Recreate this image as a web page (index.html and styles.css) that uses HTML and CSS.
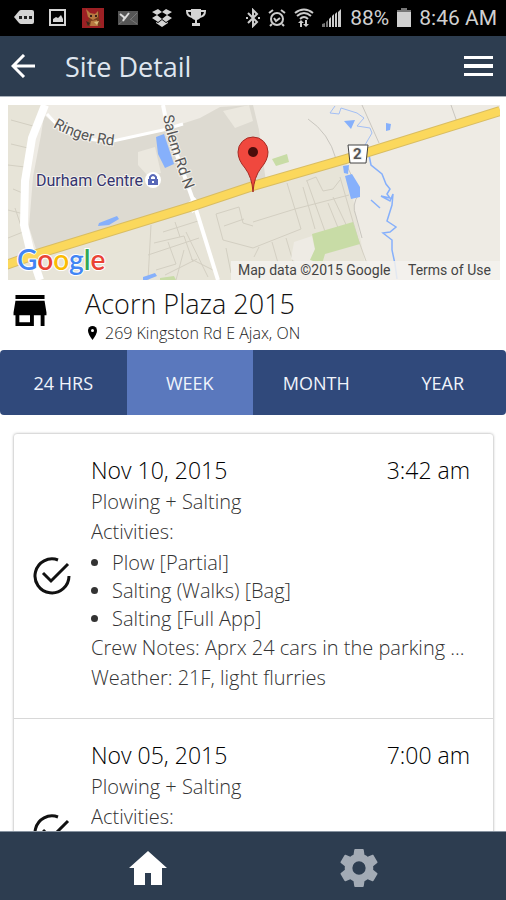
FILE: index.html
```html
<!DOCTYPE html>
<html lang="en">
<head>
    <meta charset="UTF-8">
    <meta name="viewport" content="width=device-width, initial-scale=1.0">
    <title>Site Detail</title>
    <link rel="stylesheet" href="styles.css">
</head>
<body>
    <div class="status-bar">
        <div class="status-left">
            <svg width="20" height="20" viewBox="0 0 20 20"><path fill="#d4d4d4" d="M7 2h11q2 0 2 2v10q0 2-2 2H7q-1 0-2-1L0 9l5-6q1-1 2-1z"/><path fill="#222" d="M5 8h3v3H5zM10 8h3v3h-3zM15 8h3v3h-3z"/></svg>
            <svg width="20" height="20" viewBox="0 0 20 20"><path fill="none" stroke="#d4d4d4" stroke-width="2" d="M2 2h15v15H2z"/><path fill="#d4d4d4" d="M5 14v-3l3-2 2 1 3-3 2 4v3z"/></svg>
            <svg width="22" height="20" viewBox="0 0 22 20"><path fill="#9c2024" d="M0 0h22v20H0z"/><path fill="#7a3d1c" d="M6 4l3 2h5l3-3v7l2 8H4l3-7z"/><path fill="#b87a41" d="M4 1l4 4 5 1 3-3v6l-5 3-5-3zM9 13l6-1 1 6H8z"/><path fill="#d9bd7b" d="M12 14l5-1-2 4z"/><path fill="#39231c" d="M8 7h2v2H8zM13 7h2v2h-2zM4 13l4 2-2 3z"/></svg>
            <svg width="20" height="20" viewBox="0 0 20 20"><path fill="#555" d="M0 3h20v14H0z"/><path fill="none" stroke="#777" d="M12 12l7-7M12 11l7 5M1 16l5-4"/><path fill="none" stroke="#ddd" stroke-width="2" d="M2 6l5 4 4-5M7 9l-2 4"/></svg>
            <svg width="20" height="20" viewBox="0 0 20 20"><path fill="#d4d4d4" d="M6 1l4 3-5 3-5-3zM14 1l6 3-5 3-5-3zM0 10l5-3 5 4-4 3zM20 10l-5-3-5 4 4 3zM4 14l2 1 4-3 4 3 2-1v1l-6 4-6-4z"/></svg>
            <svg width="20" height="20" viewBox="0 0 20 20"><path fill="#d4d4d4" d="M5 1h10v6q0 4-4 5v3h3v3H6v-3h3v-3Q5 11 5 7z"/><path fill="none" stroke="#d4d4d4" stroke-width="2" d="M5 3H1q0 5 5 6M15 3h4q0 5-5 6"/></svg>
        </div>
        <div class="status-right">
            <svg width="14" height="20" viewBox="0 0 14 20"><path fill="none" stroke="#ccc" stroke-width="2" d="M2 5l9 9-4 4V2l4 4-9 9M0 10h2M12 10h2"/></svg>
            <svg width="18" height="20" viewBox="0 0 18 20"><g fill="none" stroke="#ccc" stroke-width="2"><circle cx="9" cy="11" r="6"/><path d="M1 5l4-3M17 5l-4-3M6 10l2 3 4-3M4 16l-2 2M14 16l2 2"/></g></svg>
            <svg width="20" height="20" viewBox="0 0 20 20"><g fill="none" stroke="#ccc" stroke-width="2"><path d="M1 5q9-7 18 0M3 8q7-6 14 0M6 11q4-4 8 0"/></g><path fill="#ccc" d="M7 12l3 3H8v4H6v-4H4zM12 19l-3-3h2v-4h2v4h2z"/></svg>
            <svg width="20" height="20" viewBox="0 0 20 20"><path fill="#777" d="M0 19v-3l3-1v4zM4 19v-5l2-2v7z"/><path fill="#ccc" d="M7 19v-8l2-2v10zM10 19V8l2-2v13zM13 19V6l2-2v15zM16 19V4l3-3v18z"/></svg>
            <span class="status-text">88%</span>
            <svg width="14" height="20" viewBox="0 0 14 20"><path fill="#777" d="M4 0h6v2h4v3H0V2h4z"/><path fill="#d0d0d0" d="M0 4h14v15H0z"/></svg>
            <span class="status-text">8:46 AM</span>
        </div>
    </div>

    <header class="header">
        <button type="button" class="icon-button" aria-label="Back">
            <svg width="24" height="24" viewBox="0 0 24 24"><path fill="none" stroke="#fff" stroke-width="3" d="M24 12H2M13 1L2 12l11 11"/></svg>
        </button>
        <h1>Site Detail</h1>
        <button type="button" class="icon-button" aria-label="Menu">
            <svg width="29" height="24" viewBox="0 0 29 24"><path fill="#fff" d="M0 2h29v3H0zM0 10h29v4H0zM0 19h29v3H0z"/></svg>
        </button>
    </header>

    <div class="map">
        <svg class="map-view" viewBox="0 0 492 175">
            <rect width="492" height="175" fill="#eeebe4"/>
            <path fill="#e7e4d8" d="M0 0h37L20 50l-3 70 5 25-22 14zM0 159l185-59 153-45 22 120H0z"/>
            <!-- commercial area -->
            <path fill="#dddad1" d="M36 10l16 13q20 13 53 13l50-11 37-12 20-11 33-2 6 25 7 52-73 24-156 46-8-25 4-50 8-42z"/>
            <path fill="#ebe8df" d="M130 47l17-5 6 26-14 2-9-10zM215 6l26-6 4 16-18 7z"/>
            <!-- side streets -->
            <g fill="none" stroke="#d3cfc2" stroke-width="1">
                <path d="M3 15l22 6M3 39l17 4M0 60l17 2M5 84l12 5M0 105l16 4M7 103l8 24-15 6"/>
                <path d="M143 120l-3 55M167 117l5 15M155 127l35-11M146 138l30-7 9 26M140 150l51-17M160 137l8 22-20 6M178 127l22 45M183 154l22 11M176 145l-8 30M189 154l-32 16"/>
                <path d="M208 109l7 26 30 8M208 109l23-7 4 16 10 3M218 143l5 25M216 121l20-7"/>
                <path d="M245 117l42-13 54-14M279 78l14 46-48 19M299 76l20 56M298 76l10-4 7 14 10-2 7-9M320 98l13 32M295 82l12 42M325 92l18 38M332 72l18 62 11 30M264 137l8 28M278 133l9 30M251 142l-5 10"/>
                <path stroke="#c9c6bf" d="M300 14q21 14 28 40M354 0l17 38M443 0l6 17"/>
                <path stroke="#c9c6bf" d="M339 61q8 16 12 28-8 11-3 22l6 22"/>
            </g>
            <path fill="#eeebe4" d="M286 137l18-6q2 12 5 19l-9 13-17-9z"/>
            <path fill="#c8dca6" d="M304 129l41-12 7 22-35 10-3 10-12-4 5-11zM264 54l15-5 2 8-13 4zM152 173l14-2 2 4h-16z"/>
            <!-- water -->
            <path fill="#86b0fb" d="M148 32l8-3 10 30-9 4-7-14zM91 118l18-7 2 3-10 6-11 1zM135 172l12-4 2 3-10 4h-4zM336 16l11-1-4 9zM378 18l5 1-1 6-4 1zM335 61l6-1-1 9-4-1zM337 71l7-2 8 13v10l-9 2z"/>
            <path fill="none" stroke="#86b0fb" stroke-width="1.500" d="M361 50l2 10 11 9 4 10 4 5-3 5 3 4-9-2 9 5 3-7-1 11-5 16 9 6-6 5-7 1 9 7v10l3 14 2 15M363 95l9 8"/>
            <path fill="none" stroke="#a3bff5" stroke-width="1" d="M327 1l-5 7 9 1 2-6 16 5 7 5-7 8 13 2 2 5-7 12"/>
            <!-- roads -->
            <g fill="none" stroke="#fff">
                <path stroke-width="3" d="M39 9l13 14q20 13 53 13l50-11 20-6"/>
                <path stroke-width="4" d="M155 0l5 25 25 70 25 80"/>
                <path stroke-width="8" d="M37 0L24 33l-7 43-1 44 6 25 10 30"/>
                <path stroke-width="12" d="M182 96l7 8"/>
            </g>
            <path fill="none" stroke="#d9bd62" stroke-width="10" d="M-2 160l34-12 153-47 60-20 93-27 154-48"/>
            <path fill="none" stroke="#fbd85c" stroke-width="8" d="M-2 160l34-12 153-47 60-20 93-27 154-48"/>
            <path fill="#fff" stroke="#444" d="M340 40h20l-2 18h-16z"/>
            <path id="ringer" fill="none" d="M45 22Q73 39 121 42"/>
            <path id="salem" fill="none" d="M155 11Q160 42 184 102"/>
            <g class="map-label">
                <text x="345" y="54" class="map-bold">2</text>
                <text><textPath href="#ringer">Ringer Rd</textPath></text>
                <text><textPath href="#salem">Salem Rd N</textPath></text>
                <text x="28" y="81" class="map-place">Durham Centre</text>
            </g>
            <circle cx="145" cy="75" r="8" fill="#fff"/>
            <path fill="#5868b8" d="M140 74h10v6h-10z"/>
            <path fill="none" stroke="#5868b8" stroke-width="2" d="M142 75v-3q3-4 6 0v3"/>
            <path fill="#fff" d="M144 76h2v2h-2z"/>
            <text x="9" y="165" class="map-logo"><tspan fill="#4285f4">G</tspan><tspan fill="#ea4335">o</tspan><tspan fill="#fbbc05">o</tspan><tspan fill="#4285f4">g</tspan><tspan fill="#34a853">l</tspan><tspan fill="#ea4335">e</tspan></text>
            <path fill="#f3f2ee" fill-opacity=".85" d="M223 156h269v19H223z"/>
            <g class="map-credit">
                <text x="230" y="170">Map data ©2015 Google</text>
                <text x="400" y="170">Terms of Use</text>
            </g>
            <!-- marker -->
            <path fill="#f0483e" stroke="#a52b24" d="M245 87q-1-15-8-24-7-8-7-16a15 15 0 0 1 30 0q0 8-7 16-7 9-8 24z"/>
            <circle cx="245" cy="47" r="5" fill="#4b0d0b"/>
        </svg>
    </div>

    <div class="site">
        <svg class="site-icon" width="34" height="31" viewBox="0 0 34 32"><path d="M2 0h30v4H2zM2 6h30l2 12v3h-2v11h-4V21h-7v11H2V21H0v-3zM6 21v7h11v-7z"/></svg>
        <div>
            <h2>Acorn Plaza 2015</h2>
            <p class="address">
                <svg width="9" height="14" viewBox="0 0 9 14"><path d="M4.500 14Q0 8 0 4.500a4.500 4.500 0 0 1 9 0Q9 8 4.500 14z"/><circle cx="4.500" cy="4.500" r="1.500" fill="#fff"/></svg>
                269 Kingston Rd E Ajax, ON
            </p>
        </div>
    </div>

    <div class="tabs">
        <button type="button" class="tab">24 HRS</button>
        <button type="button" class="tab active">WEEK</button>
        <button type="button" class="tab">MONTH</button>
        <button type="button" class="tab">YEAR</button>
    </div>

    <main class="content">
        <div class="visits">
            <div class="visit">
                <svg class="check" width="38" height="38" viewBox="0 0 38 38"><path fill="none" stroke="#111" stroke-width="3" d="M25 3A17 17 0 1 0 36 19M10 16l8 8L35 7"/></svg>
                <div class="visit-body">
                    <div class="visit-head">
                        <h3>Nov 10, 2015</h3>
                        <span>3:42 am</span>
                    </div>
                    <p>Plowing + Salting</p>
                    <p>Activities:</p>
                    <ul>
                        <li>Plow [Partial]</li>
                        <li>Salting (Walks) [Bag]</li>
                        <li>Salting [Full App]</li>
                    </ul>
                    <p>Crew Notes: Aprx 24 cars in the parking ...</p>
                    <p>Weather: 21F, light flurries</p>
                </div>
            </div>
            <div class="visit">
                <svg class="check" width="38" height="38" viewBox="0 0 38 38"><path fill="none" stroke="#111" stroke-width="3" d="M25 3A17 17 0 1 0 36 19M10 16l8 8L35 7"/></svg>
                <div class="visit-body">
                    <div class="visit-head">
                        <h3>Nov 05, 2015</h3>
                        <span>7:00 am</span>
                    </div>
                    <p>Plowing + Salting</p>
                    <p>Activities:</p>
                </div>
            </div>
        </div>
    </main>

    <nav class="footer">
        <a href="#home" aria-label="Home">
            <svg width="38" height="34" viewBox="0 0 38 34"><path fill="#fff" d="M19 0l19 17h-5v17H22V22h-6v12H5V17H0z"/></svg>
        </a>
        <a href="#settings" aria-label="Settings">
            <svg width="38" height="38" viewBox="2 2 20 20"><path fill="#a3abb5" d="M19.430 12.980c.04-.32.07-.64.07-.98s-.03-.66-.07-.98l2.110-1.650c.19-.15.24-.42.12-.64l-2-3.460c-.12-.22-.39-.3-.61-.22l-2.490 1c-.52-.4-1.080-.73-1.690-.98l-.38-2.650A.49.49 0 0 0 14 2h-4c-.25 0-.46.18-.49.42l-.38 2.650c-.61.25-1.170.59-1.690.98l-2.490-1c-.23-.09-.49 0-.61.22l-2 3.460c-.13.22-.07.49.12.64l2.110 1.650c-.04.32-.07.65-.07.98s.03.66.07.98l-2.110 1.650c-.19.15-.24.42-.12.64l2 3.460c.12.22.39.3.61.22l2.490-1c.52.4 1.080.73 1.690.98l.38 2.650c.03.24.24.42.49.42h4c.25 0 .46-.18.49-.42l.38-2.650c.61-.25 1.170-.59 1.690-.98l2.490 1c.23.09.49 0 .61-.22l2-3.460c.12-.22.07-.49-.12-.64zM12 15.500a3.500 3.500 0 1 1 0-7 3.500 3.500 0 0 1 0 7z"/></svg>
        </a>
    </nav>
</body>
</html>
```
FILE: styles.css
```css
* {
    box-sizing: border-box;
}

body {
    display: flex;
    flex-direction: column;
    height: 100vh;
    margin: 0;
    font-family: "Open Sans", sans-serif;
    background-color: #fff;
    color: #111;
}

svg {
    display: block;
    flex-shrink: 0;
}

h1, h2, h3, p {
    margin: 0;
    font-weight: 300;
}

.status-bar {
    display: flex;
    justify-content: space-between;
    align-items: center;
    height: 36px;
    padding: 0 9px 0 14px;
    background-color: #000;
}

.status-left {
    display: flex;
    gap: 14px;
}

.status-right {
    display: flex;
    align-items: center;
    gap: 8px;
}

.status-text {
    font-family: Roboto, sans-serif;
    font-size: 21px;
    line-height: 24px;
    color: #d0d0d0;
}

.header {
    display: flex;
    align-items: center;
    height: 61px;
    padding: 0 13px 0 11px;
    background-color: #2d3d50;
    border-bottom: 1px solid #a9b1ba;
}

.header h1 {
    flex: 1;
    padding-left: 30px;
    font-size: 27px;
    font-weight: 400;
    color: #dfe6ef;
}

.icon-button {
    padding: 0;
    border: none;
    background: none;
    cursor: pointer;
}

.map {
    padding: 8px 6px 0 8px;
}

.map-view {
    width: 100%;
}

.map-label {
    font-family: Roboto, sans-serif;
    font-size: 15px;
    fill: #555;
    stroke: #f3f1ec;
    stroke-width: 2px;
    paint-order: stroke;
}

.map-place {
    font-size: 16px;
    fill: #34346f;
}

.map-bold {
    font-weight: 700;
}

.map-logo {
    font-family: Lato, sans-serif;
    font-size: 28px;
    font-weight: 600;
    stroke: #fff;
    stroke-width: 2px;
    paint-order: stroke;
}

.map-credit {
    font-family: Roboto, sans-serif;
    font-size: 14px;
    fill: #444;
}

.site {
    display: flex;
    gap: 38px;
    padding: 6px 13px;
}

.site-icon {
    margin-top: 9px;
}

.site h2 {
    font-size: 27px;
    line-height: 36px;
}

.address {
    display: flex;
    align-items: center;
    gap: 8px;
    padding-left: 3px;
    font-size: 16px;
    line-height: 22px;
    color: #222;
}

.tabs {
    display: flex;
    border-radius: 4px;
    overflow: hidden;
    flex-shrink: 0;
}

.tab {
    flex: 1;
    height: 65px;
    padding: 0;
    border: none;
    background-color: #30497b;
    color: #f0f4fb;
    font-family: inherit;
    font-size: 18px;
    cursor: pointer;
}

.tab.active {
    background-color: #5a78bd;
}

.content {
    flex: 1;
    min-height: 0;
    padding: 19px 13px 0 14px;
    overflow-y: auto;
    scrollbar-width: none;
}

.visits {
    border-radius: 3px;
    box-shadow: 0 0 3px rgba(0, 0, 0, 0.4);
}

.visit {
    display: flex;
    align-items: center;
    gap: 20px;
    min-height: 228px;
    padding: 0 23px 0 19px;
    border-bottom: 1px solid #d8d8d8;
}

.visit-body {
    flex: 1;
    align-self: flex-start;
    min-width: 0;
    padding: 20px 0 25px;
    font-size: 20px;
    line-height: 30px;
    color: #333;
}

.visit-body p {
    overflow: hidden;
    text-overflow: ellipsis;
    white-space: nowrap;
}

.visit-head {
    display: flex;
    justify-content: space-between;
    font-size: 23px;
    line-height: 33px;
    font-weight: 300;
    color: #000;
}

.visit-head h3 {
    font-size: 23px;
}

.visit ul {
    margin: 2px 0 0;
    padding-left: 21px;
    font-weight: 300;
    line-height: 28px;
}

.footer {
    display: grid;
    grid-template-columns: 1fr 1fr;
    place-items: center;
    height: 69px;
    padding: 4px 42px 0;
    flex-shrink: 0;
    background-color: #2d3d50;
    border-top: 1px solid #8793a0;
}
```
